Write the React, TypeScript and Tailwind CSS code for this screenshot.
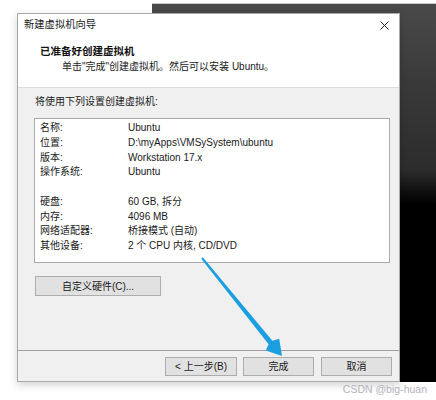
import React from "react";

const FONT = '"Liberation Sans", "Noto Sans CJK SC", sans-serif';

const rows: [string, string][] = [
  ["名称:", "Ubuntu"],
  ["位置:", "D:\\myApps\\VMSySystem\\ubuntu"],
  ["版本:", "Workstation 17.x"],
  ["操作系统:", "Ubuntu"],
  ["", ""],
  ["硬盘:", "60 GB, 拆分"],
  ["内存:", "4096 MB"],
  ["网络适配器:", "桥接模式 (自动)"],
  ["其他设备:", "2 个 CPU 内核, CD/DVD"],
];

function WinButton({ label, className = "" }: { label: string; className?: string }) {
  return (
    <div
      className={
        "flex items-center justify-center border border-[#adadad] bg-[#e1e1e1] text-[10px] text-[#1a1a1a] " +
        className
      }
    >
      {label}
    </div>
  );
}

export default function App() {
  return (
    <div className="relative h-[400px] w-[436px] overflow-hidden bg-white" style={{ fontFamily: FONT }}>
      {/* window behind the wizard */}
      <div className="absolute left-[152px] top-[3px] h-[379px] w-[284px] border-t border-[#c8c8c8] bg-[linear-gradient(180deg,#4a4a4a_0%,#3a3a3a_20%,#2c2c2c_44%,#121212_49%,#000_53%,#000_100%)]" />

      {/* wizard dialog */}
      <div className="absolute left-[17px] top-[13px] flex h-[369px] w-[383px] flex-col border border-[#a9a9a9] bg-[#f0f0f0] shadow-[0_3px_8px_rgba(0,0,0,0.18)]">
        <div className="relative h-[74px] border-b border-[#dcdcdc] bg-white">
          <div className="mt-[4px] pl-[6px] text-[10.3px] leading-[14px] text-[#1a1a1a]">新建虚拟机向导</div>
          <svg
            className="absolute right-[10px] top-[7px]"
            width="9"
            height="9"
            viewBox="0 0 9 9"
          >
            <path d="M0.5 0.5 L8.5 8.5 M8.5 0.5 L0.5 8.5" stroke="#222" strokeWidth="1" fill="none" />
          </svg>
          <div className="mt-[12px] pl-[22px] text-[10.5px] font-bold leading-[14px] text-[#111]">
            已准备好创建虚拟机
          </div>
          <div className="mt-[2px] pl-[44px] text-[10px] leading-[14px] text-[#1a1a1a]">
            单击"完成"创建虚拟机。然后可以安装 Ubuntu。
          </div>
        </div>

        <div className="flex h-[262px] flex-col pl-[16px] pr-[9px] pt-[7px]">
          <div className="ml-px text-[10px] leading-[14px] text-[#1a1a1a]">将使用下列设置创建虚拟机:</div>
          <div className="mt-[9px] h-[145px] border border-[#ababab] bg-white pl-[5px] pt-[2px]">
            {rows.map(([k, v], i) => (
              <div key={i} className="flex h-[14.75px] text-[10px] leading-[14.75px] text-[#1a1a1a]">
                <div className="w-[88px]">{k}</div>
                <div>{v}</div>
              </div>
            ))}
          </div>
          <WinButton label="自定义硬件(C)..." className="ml-px mt-[13px] h-[20px] w-[126px]" />
        </div>

        <div className="flex flex-1 justify-end gap-[6px] border-t border-[#a0a0a0] pr-[7px] pt-[6px]">
          <WinButton label="< 上一步(B)" className="h-[19px] w-[72px]" />
          <WinButton label="完成" className="h-[19px] w-[71px]" />
          <WinButton label="取消" className="ml-px h-[19px] w-[71px]" />
        </div>
      </div>

      {/* pointer arrow */}
      <svg className="absolute left-0 top-0" width="436" height="400" viewBox="0 0 436 400">
        <polygon
          points="202.8,257.2 272.4,340.8 279.2,338.8 282,356 265.8,350.6 268.6,344.2 201.2,258.8"
          fill="#1b9fe0"
        />
      </svg>

      <div className="absolute right-[9px] top-[382px] text-[10.5px] leading-[14px] text-[#b4b4bc]">CSDN @big-huan</div>
    </div>
  );
}
